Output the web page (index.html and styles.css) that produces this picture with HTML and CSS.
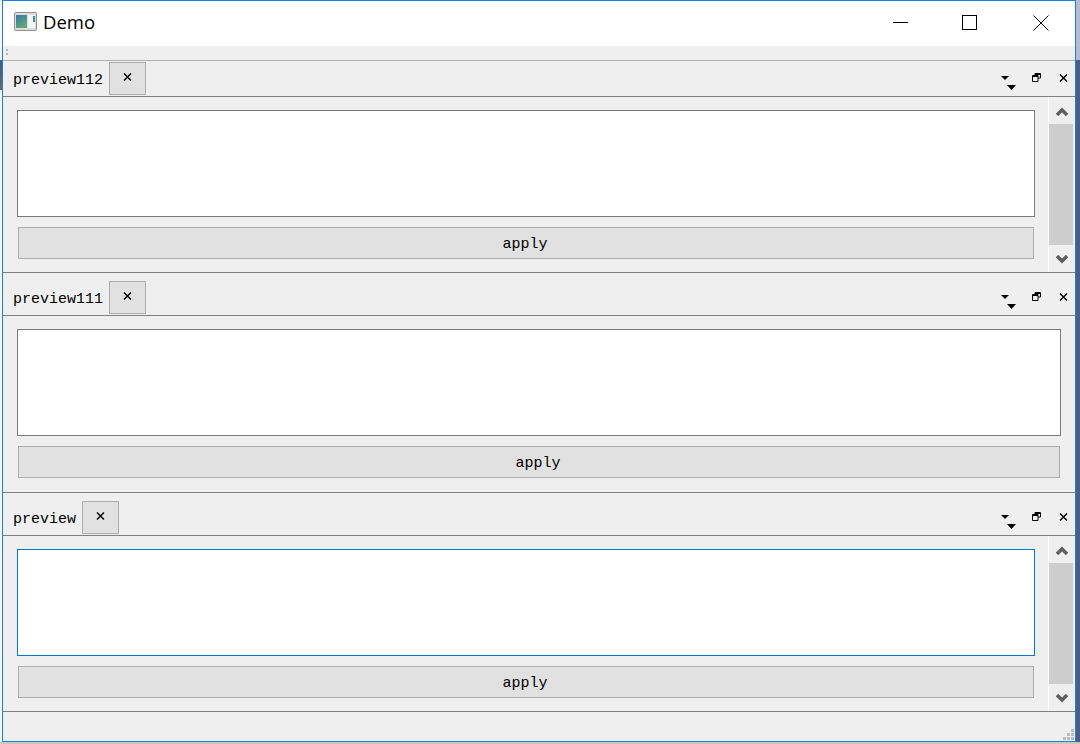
FILE: index.html
```html
<!DOCTYPE html>
<html>
<head>
<meta charset="utf-8">
<title>Demo</title>
<link rel="stylesheet" href="styles.css">
</head>
<body>
<div class="window">
  <header class="titlebar">
    <svg class="app-icon" width="24" height="20" viewBox="0 0 24 20">
      <defs><linearGradient id="ic" x1="0" y1="0" x2="0.6" y2="1"><stop offset="0" stop-color="#3a76a8"/><stop offset="1" stop-color="#62a878"/></linearGradient></defs>
      <rect x="0.5" y="0.5" width="22" height="18" rx="1.5" fill="#dedede" stroke="#8f8f8f"/>
      <rect x="2" y="3" width="11" height="13" fill="url(#ic)"/>
      <rect x="14" y="3" width="7" height="13" fill="#f4f4f4"/>
      <rect x="19" y="4" width="2" height="6" fill="#3f8f8d"/>
    </svg>
    <span class="app-title">Demo</span>
    <div class="caption-buttons">
      <svg class="cap" width="16" height="16" viewBox="0 0 16 16"><path d="M0 7.5H15" stroke="#000" fill="none"/></svg>
      <svg class="cap" width="16" height="16" viewBox="0 0 16 16"><rect x="0.5" y="0.5" width="14" height="14" fill="none" stroke="#000"/></svg>
      <svg class="cap cap-close" width="16" height="16" viewBox="0 0 16 16"><path d="M0.5 0.5L15.5 15.5M15.5 0.5L0.5 15.5" stroke="#000" fill="none"/></svg>
    </div>
  </header>
  <div class="toolbar">
    <svg class="grip-v" width="4" height="8" viewBox="0 0 4 8"><path d="M1 1h2v2H1zM1 5h2v2H1z" fill="#b5b5b5"/></svg>
  </div>

  <section class="dock">
    <div class="dock-head head-a">
      <span class="tab-label">preview112</span>
      <span class="tab-close"><svg width="9" height="8" viewBox="0 0 9 8"><path d="M1 0.5L8 7.5M8 0.5L1 7.5" stroke="#000" stroke-width="1.4" fill="none"/></svg></span>
      <div class="dock-tools">
        <svg class="t-menu" width="18" height="14" viewBox="0 0 18 14"><path d="M0 0H8L4 4ZM6 9H15L10.5 14Z" fill="#000"/></svg>
        <svg class="t-float" width="9" height="9" viewBox="0 0 9 9"><path d="M3 2.500V0.500H8.500V5H6M0.500 2.500H6V8.500H0.500ZM0.500 3.500H6M3 1.500H8.500" stroke="#000" fill="none"/></svg>
        <svg class="t-close" width="9" height="8" viewBox="0 0 9 8"><path d="M1 0.500L8 7.500M8 0.500L1 7.500" stroke="#000" stroke-width="1.4" fill="none"/></svg>
      </div>
    </div>
    <div class="dock-body body-a">
      <div class="form">
        <div class="editor"></div>
        <button class="apply">apply</button>
      </div>
      <div class="scrollbar">
        <svg class="arrow" width="12" height="9" viewBox="0 0 12 9"><path d="M1 8L6 3L11 8" stroke="#5f5f5f" stroke-width="3.400" fill="none"/></svg>
        <div class="track"><div class="thumb"></div></div>
        <svg class="arrow" width="12" height="9" viewBox="0 0 12 9"><path d="M1 1L6 6L11 1" stroke="#5f5f5f" stroke-width="3.400" fill="none"/></svg>
      </div>
    </div>
  </section>

  <section class="dock">
    <div class="dock-head head-b">
      <span class="tab-label">preview111</span>
      <span class="tab-close"><svg width="9" height="8" viewBox="0 0 9 8"><path d="M1 0.5L8 7.5M8 0.5L1 7.5" stroke="#000" stroke-width="1.4" fill="none"/></svg></span>
      <div class="dock-tools">
        <svg class="t-menu" width="18" height="14" viewBox="0 0 18 14"><path d="M0 0H8L4 4ZM6 9H15L10.5 14Z" fill="#000"/></svg>
        <svg class="t-float" width="9" height="9" viewBox="0 0 9 9"><path d="M3 2.500V0.500H8.500V5H6M0.500 2.500H6V8.500H0.500ZM0.500 3.500H6M3 1.500H8.500" stroke="#000" fill="none"/></svg>
        <svg class="t-close" width="9" height="8" viewBox="0 0 9 8"><path d="M1 0.500L8 7.500M8 0.500L1 7.500" stroke="#000" stroke-width="1.4" fill="none"/></svg>
      </div>
    </div>
    <div class="dock-body body-b">
      <div class="form form-wide">
        <div class="editor"></div>
        <button class="apply">apply</button>
      </div>
    </div>
  </section>

  <section class="dock">
    <div class="dock-head head-b">
      <span class="tab-label">preview</span>
      <span class="tab-close"><svg width="9" height="8" viewBox="0 0 9 8"><path d="M1 0.5L8 7.5M8 0.5L1 7.5" stroke="#000" stroke-width="1.4" fill="none"/></svg></span>
      <div class="dock-tools">
        <svg class="t-menu" width="18" height="14" viewBox="0 0 18 14"><path d="M0 0H8L4 4ZM6 9H15L10.5 14Z" fill="#000"/></svg>
        <svg class="t-float" width="9" height="9" viewBox="0 0 9 9"><path d="M3 2.500V0.500H8.500V5H6M0.500 2.500H6V8.500H0.500ZM0.500 3.500H6M3 1.500H8.500" stroke="#000" fill="none"/></svg>
        <svg class="t-close" width="9" height="8" viewBox="0 0 9 8"><path d="M1 0.500L8 7.500M8 0.500L1 7.500" stroke="#000" stroke-width="1.4" fill="none"/></svg>
      </div>
    </div>
    <div class="dock-body body-a">
      <div class="form">
        <div class="editor focused"></div>
        <button class="apply">apply</button>
      </div>
      <div class="scrollbar">
        <svg class="arrow" width="12" height="9" viewBox="0 0 12 9"><path d="M1 8L6 3L11 8" stroke="#5f5f5f" stroke-width="3.400" fill="none"/></svg>
        <div class="track"><div class="thumb"></div></div>
        <svg class="arrow" width="12" height="9" viewBox="0 0 12 9"><path d="M1 1L6 6L11 1" stroke="#5f5f5f" stroke-width="3.400" fill="none"/></svg>
      </div>
    </div>
  </section>

  <footer class="statusbar">
    <svg class="size-grip" width="11" height="11" viewBox="0 0 11 11"><path d="M8 0h3v3H8zM4 4h3v3H4zM8 4h3v3H8zM0 8h3v3H0zM4 8h3v3H4zM8 8h3v3H8z" fill="#bdbdbd"/></svg>
  </footer>
</div>
</body>
</html>
```
FILE: styles.css
```css
* { box-sizing: border-box; }
html, body { margin: 0; padding: 0; height: 744px; overflow: hidden; }
body {
  padding-left: 2px;
  background:
    linear-gradient(#c8c8c4, #c8c8c4) left bottom / 100% 2px no-repeat,
    linear-gradient(#4c5d86, #4c5d86) right bottom / 4px 684px no-repeat,
    linear-gradient(#b6bccd, #b6bccd) right top / 4px 60px no-repeat,
    linear-gradient(#3f5a8c, #6a6a60) left 60px / 2px 30px no-repeat,
    #f4f6f8;
}
.window {
  width: 1074px;
  height: 742px;
  border: 1px solid #1b80d8;
  background: #efefef;
  display: flex;
  flex-direction: column;
}
.titlebar {
  height: 45px;
  flex: none;
  background: #fff;
  display: flex;
  align-items: center;
  padding: 0 26px 4px 11px;
}
.app-icon { margin-right: 5px; }
.app-title {
  font-family: "Open Sans", "Liberation Sans", sans-serif;
  font-size: 18.5px;
  color: #000;
}
.caption-buttons {
  margin-left: auto;
  margin-top: 3px;
  display: flex;
  gap: 53px;
}
.cap-close { margin-left: 2px; }
.toolbar {
  height: 15px;
  flex: none;
  border-bottom: 1px solid #b0b0b0;
  padding: 2px 0 0 2px;
  display: flex;
}
.dock { flex: none; display: flex; flex-direction: column; }
.dock-head {
  display: flex;
  align-items: flex-end;
  padding: 0 0 1px 10px;
  border-bottom: 1px solid #808080;
  font-family: "Liberation Mono", monospace;
  font-size: 15px;
  color: #000;
}
.head-a { height: 36px; }
.head-b { height: 43px; }
.tab-label { margin: 0 6px 6px 0; }
.tab-close {
  width: 37px;
  height: 33px;
  background: #e1e1e1;
  border: 1px solid #adadad;
  display: flex;
  align-items: center;
  justify-content: center;
  padding-bottom: 3px;
}
.dock-tools {
  margin: 0 0 5px auto;
  display: flex;
  align-items: flex-start;
  padding-right: 7px;
}
.t-menu { margin-top: 3px; }
.t-float { margin-left: 13px; }
.t-close { margin: 1px 0 0 18px; }
.dock-body {
  display: flex;
  border-bottom: 1px solid #808080;
}
.body-a { height: 176px; }
.body-b { height: 177px; }
.form {
  width: 1045px;
  flex: none;
  padding: 13px 0 0 14px;
  display: flex;
  flex-direction: column;
}
.form-wide { width: 1071px; }
.editor {
  height: 107px;
  margin-right: 13px;
  border: 1px solid #7a7a7a;
  background: #fff;
}
.editor.focused { border-color: #0078d7; }
.apply {
  height: 32px;
  margin: 10px 14px 0 1px;
  background: #e1e1e1;
  border: 1px solid #adadad;
  padding: 2px 2px 0 0;
  font-family: "Liberation Mono", monospace;
  font-size: 15px;
  color: #000;
}
.scrollbar {
  width: 26px;
  flex: none;
  border-left: 1px solid #fff;
  display: flex;
  flex-direction: column;
  align-items: center;
}
.arrow { flex: none; margin: 10px 0 8px 1px; }
.track { flex: 1; width: 24px; margin-right: 1px; }
.thumb { height: 100%; background: #cdcdcd; }
.statusbar {
  flex: 1;
  display: flex;
  justify-content: flex-end;
  align-items: flex-end;
  padding: 0 1px 1px 0;
}
```
